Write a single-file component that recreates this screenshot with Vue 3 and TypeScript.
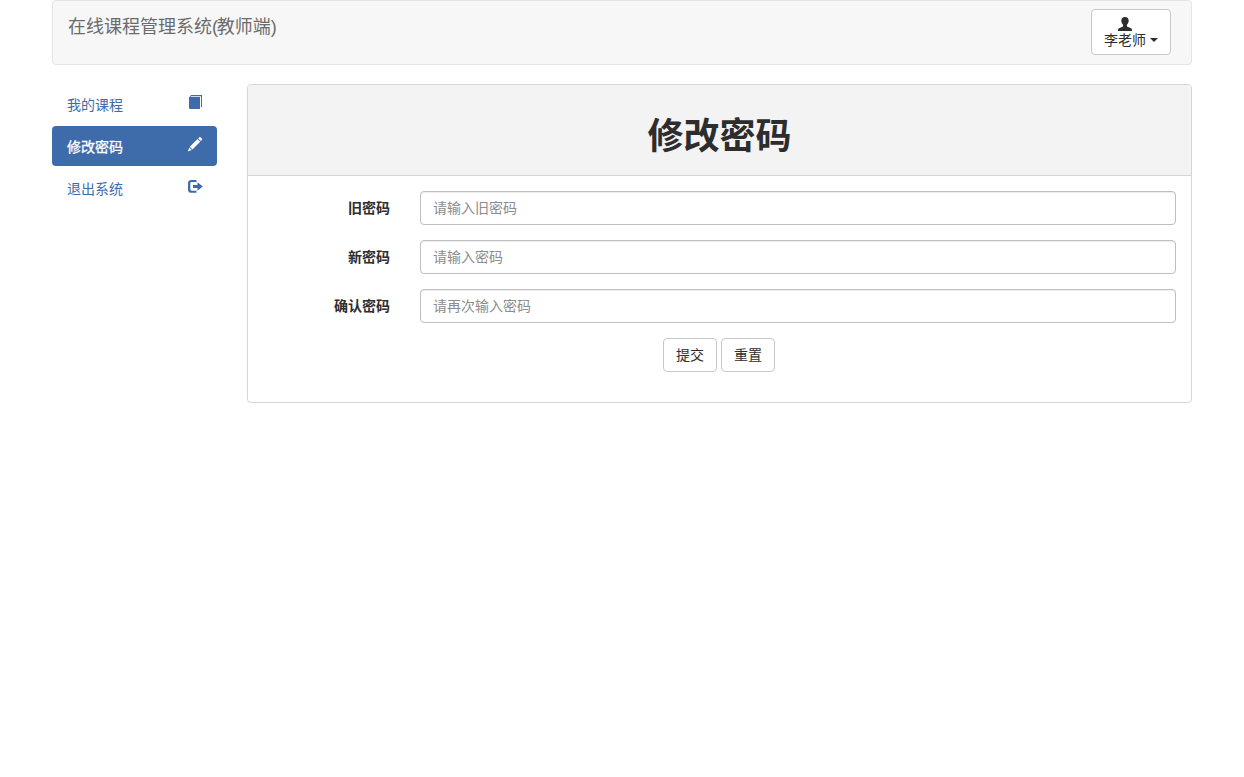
<script setup lang="ts">
import { ref } from 'vue'

interface MenuItem {
  label: string
  icon: 'book' | 'pencil' | 'logout'
}

interface Field {
  id: string
  label: string
  placeholder: string
}

const menu: MenuItem[] = [
  { label: '我的课程', icon: 'book' },
  { label: '修改密码', icon: 'pencil' },
  { label: '退出系统', icon: 'logout' },
]
const active = ref('修改密码')

const fields: Field[] = [
  { id: 'old', label: '旧密码', placeholder: '请输入旧密码' },
  { id: 'new', label: '新密码', placeholder: '请输入密码' },
  { id: 'confirm', label: '确认密码', placeholder: '请再次输入密码' },
]
</script>

<template>
  <div class="container">
    <header class="navbar">
      <span class="brand">在线课程管理系统<span class="paren">(</span>教师端<span class="paren">)</span></span>
      <button class="btn user" type="button">
        <svg class="person" width="14" height="14" viewBox="0 0 14 14" fill="currentColor">
          <path d="M7 0C4.6 0 3.2 1.4 3.3 3.7C3.4 5.5 4.1 6.8 5.1 7.7V8.7C5.1 9.5 4.4 9.9 3.3 10.3L1 11.2C.2 11.6 0 12.2 0 14H14C14 12.2 13.8 11.6 13 11.2L10.7 10.3C9.6 9.9 8.9 9.5 8.9 8.7V7.7C9.9 6.8 10.6 5.5 10.7 3.7C10.8 1.4 9.4 0 7 0Z" />
        </svg>
        <span class="name">李老师<i class="caret"></i></span>
      </button>
    </header>

    <div class="layout">
      <nav class="menu">
        <a
          v-for="item in menu"
          :key="item.label"
          class="menu-item"
          :class="{ active: item.label === active }"
          @click="active = item.label"
        >
          <span class="menu-label">{{ item.label }}</span>
          <svg class="icon" width="16" height="16" viewBox="0 0 16 16" fill="currentColor">
            <template v-if="item.icon === 'book'">
              <path d="M4 1H15V12.7L14 13.6V2.2H4.1L3.3 3H13V15H3.3Q2 15 2 13.7V3.4Z" />
            </template>
            <template v-else-if="item.icon === 'pencil'">
              <path d="M12.3 1.3Q12.9.8 13.5 1.3L15 2.8Q15.5 3.4 15 4L13.9 5.1L11.2 2.4ZM10.5 3.1L13.2 5.8L5.5 13.4L2.8 10.7ZM2.3 11.5L4.8 14L.8 15.4Z" />
            </template>
            <template v-else>
              <path d="M9.5 2H4.5Q1 2 1 5.2V11.4Q1 14.8 4.5 14.8H9.5V12.7H4.7Q3.3 12.7 3.3 11.3V5.5Q3.3 4.1 4.7 4.1H9.5ZM10.5 4.3L15.8 8.5L10.5 12.7V10H6V7H10.5Z" />
            </template>
          </svg>
        </a>
      </nav>

      <main class="panel">
        <div class="panel-heading"><h1>修改密码</h1></div>
        <form class="panel-body" @submit.prevent>
          <div v-for="field in fields" :key="field.id" class="row">
            <label :for="field.id">{{ field.label }}</label>
            <input :id="field.id" type="password" :placeholder="field.placeholder" />
          </div>
          <div class="actions">
            <button class="btn" type="submit">提交</button>
            <button class="btn" type="reset">重置</button>
          </div>
        </form>
      </main>
    </div>
  </div>
</template>

<style>
body {
  background: #fff;
}
</style>

<style scoped>
.container,
.container * {
  box-sizing: border-box;
}
.container {
  width: 1140px;
  margin: 0 auto;
  font: 14px/20px "Liberation Sans", "Noto Sans CJK SC", sans-serif;
  color: #2d2d2d;
}
.navbar {
  display: flex;
  justify-content: space-between;
  align-items: flex-start;
  height: 65px;
  padding: 8px 20px 0 15px;
  background: #f7f7f7;
  border: 1px solid #e4e4e4;
  border-radius: 4px;
}
.brand {
  padding-top: 8px;
  font-size: 18px;
  line-height: 20px;
  color: #6b6b6b;
}
.paren {
  letter-spacing: -1.3px;
}
.btn {
  height: 34px;
  padding: 0 12px;
  font: inherit;
  color: #2d2d2d;
  background: #fff;
  border: 1px solid #c8c8c8;
  border-radius: 4px;
}
.user {
  display: flex;
  flex-direction: column;
  align-items: flex-start;
  width: 80px;
  height: 46px;
  padding: 7px 12px 0;
}
.person {
  display: block;
  margin-left: 14px;
}
.name {
  display: flex;
  align-items: center;
  margin-top: -1px;
  line-height: 20px;
}
.caret {
  margin-left: 4px;
  border-top: 4px solid;
  border-right: 4px solid transparent;
  border-left: 4px solid transparent;
}
.layout {
  display: flex;
  align-items: flex-start;
  gap: 30px;
  margin-top: 19px;
}
.menu {
  display: flex;
  flex-direction: column;
  gap: 2px;
  width: 165px;
}
.menu-item {
  display: flex;
  justify-content: space-between;
  align-items: flex-start;
  height: 40px;
  padding: 10px 14px 0 15px;
  color: #3e6cab;
  border-radius: 4px;
  cursor: pointer;
}
.menu-label {
  padding-top: 1px;
}
.menu-item.active {
  color: #fff;
  background: #3e6cab;
}
.menu-item.active .menu-label {
  -webkit-text-stroke: 0.3px currentColor;
}
.icon {
  display: block;
}
.panel {
  width: 945px;
  height: 319px;
  border: 1px solid #d6d6d6;
  border-radius: 4px;
  box-shadow: 0 1px 1px rgba(0, 0, 0, 0.05);
}
.panel-heading {
  height: 91px;
  padding-top: 32px;
  background: #f3f3f3;
  border-bottom: 1px solid #d6d6d6;
  border-radius: 3px 3px 0 0;
}
h1 {
  margin: 0;
  font-size: 36px;
  line-height: 40px;
  font-weight: 700;
  text-align: center;
}
.panel-body {
  padding: 15px;
}
.row {
  display: flex;
  align-items: center;
  gap: 30px;
  margin-bottom: 15px;
}
label {
  width: 127px;
  text-align: right;
  font-weight: 700;
}
input {
  flex: 1;
  height: 34px;
  padding: 0 12px;
  font: inherit;
  border: 1px solid #bfbfbf;
  border-radius: 4px;
  box-shadow: inset 0 1px 1px rgba(0, 0, 0, 0.075);
}
input::placeholder {
  color: #8c8c8c;
}
.actions {
  display: flex;
  justify-content: center;
  gap: 4px;
  padding-right: 1px;
}
</style>
